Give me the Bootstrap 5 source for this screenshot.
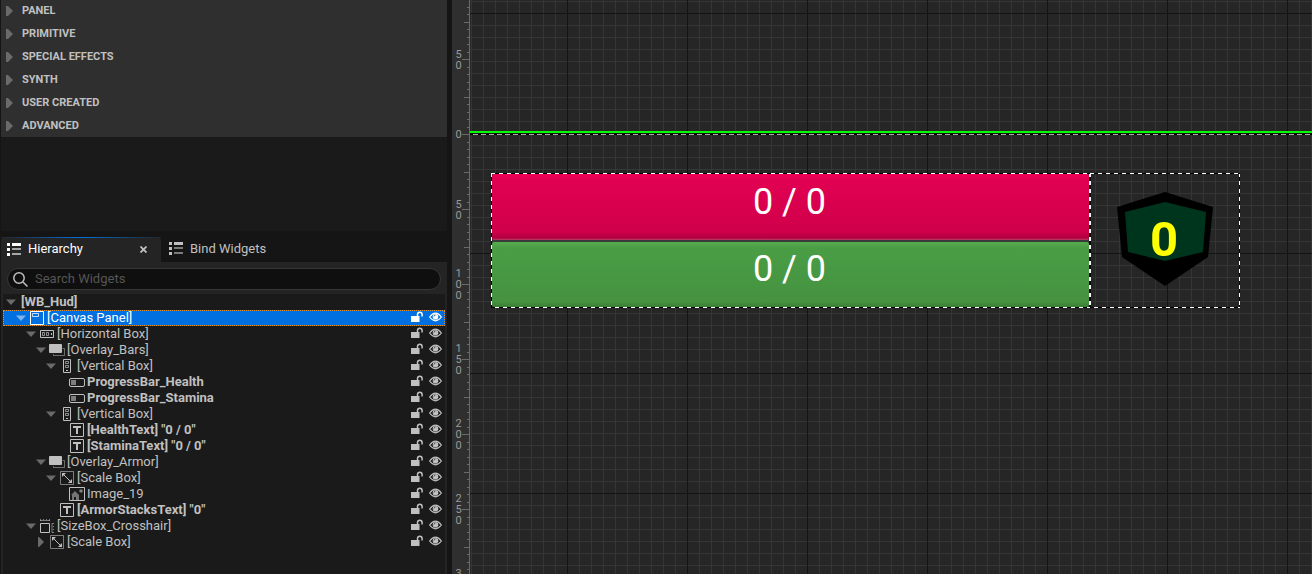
<!DOCTYPE html>
<html lang="en">
<head>
<meta charset="utf-8">
<meta name="viewport" content="width=device-width, initial-scale=1">
<title>WB_Hud</title>
<link href="https://cdn.jsdelivr.net/npm/bootstrap@5.3.0/dist/css/bootstrap.min.css" rel="stylesheet">
<style>
body{font-family:Roboto,"Liberation Sans",sans-serif;background:#151515;color:#c0c0c0;font-size:13px;line-height:16px}
.editor{min-height:100vh}
.side{width:447px;padding-left:1px}
.palette-group{height:23px;padding:0 0 0 5px;gap:9px;background:#2f2f2f;border:0;color:#c0c0c0;font-size:11px;font-weight:700;text-align:left}
.palette-first{height:22px}
.palette-space{height:94px;background:#1a1a1a}
.tabs{height:25px;margin-top:6px}
.tab-item{height:25px;border:0;background:none;color:#c0c0c0;padding:0 0 2px;gap:7px}
.tab-on{width:160px;background:#242424;color:#fff;border-radius:4px 4px 0 0;border-top:1px solid;border-image:linear-gradient(90deg,#242424,#0070e0 50%,#242424) 1;padding:0 14px 2px 6px}
.hier{background:#242424;padding:6px 2px 0}
.search{height:22px;margin:0 4px 4px;border:1px solid #363636;border-radius:11px;background:#0f0f0f;padding:0 5px;gap:7px}
.search input{background:none;border:0;outline:0;color:#c0c0c0;padding:0;font-size:13px}
.search input::placeholder{color:#555;opacity:1}
.tree{background:#1a1a1a}
.tree-row{height:16px;padding-right:3px;color:#c0c0c0;white-space:nowrap}
.tree-row .twist{width:10px;margin-right:3px;color:#6a6a6a}
.icon-cell{width:16px;margin-right:2px}
.tree-row b{font-weight:700}
.tree-row.picked{background:#0070e0;color:#fff;outline:1px dotted #e0912f;outline-offset:-1px}
.tree-row.picked .twist{color:#7fb2ea}
.act{border:0;background:none;padding:0 0 2px;color:inherit}
.acts{gap:5px}
.d0{padding-left:3px}.tree-row.d0 .twist{margin-right:5px}
.d1{padding-left:13px}.d2{padding-left:23px}.d3{padding-left:33px}.d4{padding-left:43px}
.d5{padding-left:66px}.d4n{padding-left:56px}
svg{flex:none;display:block}
.ruler{width:18px;margin-left:5px;background:#2f2f2f;border-right:1px solid #6a6a6a;overflow:hidden;color:#9a9a9a;font-size:11px;line-height:11px}
.ruler svg{left:0;top:0}
.ruler ol{margin:0;padding:22px 0 0 3px;width:10px}
.ruler li{height:75px;word-break:break-all;text-align:center}
.ruler span{width:7px}
.canvas{min-width:0;overflow:hidden;background-color:#262626;
background-image:linear-gradient(#141414 1px,transparent 1px),linear-gradient(90deg,#141414 1px,transparent 1px),linear-gradient(#353535 1px,transparent 1px),linear-gradient(90deg,#353535 1px,transparent 1px);
background-size:120px 120px,120px 120px,12px 12px,12px 12px;background-position:97px 13px,97px 13px,1px 1px,1px 1px}
.topedge{height:2px;margin:131px 0 1px;background:#0f0}
.dash-h{height:1px;background:repeating-linear-gradient(90deg,#000 0 3px,#aaa 3px 8px)}
.hud{width:749px;height:135px;margin:38px 0 0 21px}
.dashed{padding:1px;background:
repeating-linear-gradient(90deg,#fff 0 4px,#000 4px 8px) 0 0/100% 1px no-repeat,
repeating-linear-gradient(90deg,#000 0 4px,#fff 4px 8px) 0 100%/100% 1px no-repeat,
repeating-linear-gradient(#fff 0 4px,#000 4px 8px) 0 0/1px 100% no-repeat,
repeating-linear-gradient(#fff 0 4px,#000 4px 8px) 100% 0/1px 100% no-repeat}
.bars{width:599px}
.meter{color:#fff;font-size:36px;line-height:40px;padding:8px 2px 0 0;border-radius:2px}
.health{height:66px;background:linear-gradient(#f00058,#e10052 6px,#d0004a 58px,#b00040 64px,#c04068)}
.stamina{height:65px;padding-top:7px;background:linear-gradient(#57ab50,#4a9d45 6px,#459240 60px,#3b7c37)}
.split{height:2px;background:#3a3a3a}
.armor{padding:1px 2px 5px 1px}
.armor text{font:700 49px Roboto,sans-serif}
</style>
</head>
<body>
<svg width="0" height="0" class="position-absolute" aria-hidden="true">
<defs>
<symbol id="open" viewBox="0 0 10 10"><path d="M0 2.500h10L5 8z" fill="currentColor"/></symbol>
<symbol id="shut" viewBox="0 0 10 10"><path d="M2 0h1l5 5-5 5H2z" fill="currentColor"/></symbol>
<symbol id="list" viewBox="0 0 14 13"><path d="M0 0h3v3H0zM0 5h3v3H0zM0 10h3v3H0zM5 0h9v3H5z" fill="currentColor"/><path d="M5 5h9v2H5zM5 10h9v2H5z" fill="currentColor" opacity=".6"/></symbol>
<symbol id="lock" viewBox="0 0 13 12"><path d="M0 5h8.500v6H0z" fill="currentColor"/><path d="M6.500 5V3.500a2.300 2.300 0 0 1 4.600 0V5.500" fill="none" stroke="currentColor" stroke-width="1.500"/></symbol>
<symbol id="eye" viewBox="0 0 13 10"><path d="M.6 5Q6.500-2.600 12.400 5 6.500 12.600.6 5z" fill="none" stroke="currentColor" stroke-width="1.200"/><circle cx="6.500" cy="4.800" r="2.800" fill="currentColor"/><path d="M5 4.500A1.500 1.500 0 0 1 6.500 3" fill="none" stroke="#333" stroke-width=".8"/></symbol>
<symbol id="canvasp" viewBox="0 0 14 14"><path d="M.5.5h13v13H.5z" fill="none" stroke="currentColor"/><path d="M2.500 2.500h6v3h-6z" fill="none" stroke="currentColor" opacity=".75"/></symbol>
<symbol id="hbox" viewBox="0 0 14 8"><path d="M.5.5h13v7H.5z" fill="none" stroke="currentColor"/><path d="M2.500 2.500h2v3h-2zM6.500 2.500h2v3h-2z" fill="none" stroke="currentColor" opacity=".7"/><path d="M11 3h1v2h-1z" fill="currentColor"/></symbol>
<symbol id="vbox" viewBox="0 0 8 14"><path d="M.5.5h7v13h-7z" fill="none" stroke="currentColor"/><path d="M2.500 2.500h3v2h-3zM2.500 6.500h3v2h-3z" fill="none" stroke="currentColor" opacity=".7"/><path d="M3 11h2v1H3z" fill="currentColor"/></symbol>
<symbol id="overlay" viewBox="0 0 16 12"><path d="M13.500 4.500h2v7h-11V10" fill="none" stroke="currentColor" opacity=".5"/><rect width="13" height="9" rx="1" fill="currentColor"/></symbol>
<symbol id="prog" viewBox="0 0 16 9"><rect x=".5" y=".5" width="15" height="8" rx="1.500" fill="none" stroke="currentColor"/><path d="M2 2h5v5H2z" fill="currentColor" opacity=".6"/></symbol>
<symbol id="txt" viewBox="0 0 14 14"><path d="M.5.500h13v13H.5z" fill="none" stroke="currentColor"/><path d="M3 3h8v2H8v6H6V5H3z" fill="currentColor"/></symbol>
<symbol id="scale" viewBox="0 0 14 14"><path d="M.5.500h13v13H.5z" fill="none" stroke="currentColor" opacity=".6"/><path d="M2 2h4L2 6zM12 12H8l4-4z" fill="currentColor"/><path d="M4 4l6 6" stroke="currentColor"/></symbol>
<symbol id="image" viewBox="0 0 16 14"><path d="M.5.500h15v13H.5z" fill="none" stroke="currentColor"/><path d="M2 8l4-4 4 4v5H7v-3H5v3H3V8z" fill="currentColor" opacity=".55"/><circle cx="12" cy="4" r="1.800" fill="currentColor" opacity=".6"/></symbol>
<symbol id="size" viewBox="0 0 14 14"><path d="M.5 4.500h9v9h-9z" fill="none" stroke="currentColor"/><path d="M0 1.500h10M.5 0v2M3.500 0v1M6.500 0v1M9.500 0v2M14 4.500h-2v9h2M14 7.500h-1M14 10.500h-1" fill="none" stroke="currentColor" opacity=".6"/></symbol>
<symbol id="arrow" viewBox="0 0 7 10"><path d="M0 0h2l5 5-5 5H0z" fill="#6a6a6a"/></symbol>
</defs>
</svg>
<div class="editor d-flex">
<aside class="side flex-shrink-0 d-flex flex-column">
<div class="d-flex flex-column">
<button class="palette-group palette-first d-flex align-items-center"><svg width="7" height="10"><use href="#arrow"/></svg>PANEL</button>
<button class="palette-group d-flex align-items-center"><svg width="7" height="10"><use href="#arrow"/></svg>PRIMITIVE</button>
<button class="palette-group d-flex align-items-center"><svg width="7" height="10"><use href="#arrow"/></svg>SPECIAL EFFECTS</button>
<button class="palette-group d-flex align-items-center"><svg width="7" height="10"><use href="#arrow"/></svg>SYNTH</button>
<button class="palette-group d-flex align-items-center"><svg width="7" height="10"><use href="#arrow"/></svg>USER CREATED</button>
<button class="palette-group d-flex align-items-center"><svg width="7" height="10"><use href="#arrow"/></svg>ADVANCED</button>
</div>
<div class="palette-space"></div>
<div class="tabs d-flex">
<button class="tab-item tab-on d-flex align-items-center"><svg width="14" height="13"><use href="#list"/></svg>Hierarchy<svg class="ms-auto" width="7" height="7" viewBox="0 0 7 7" stroke="#c0c0c0" stroke-width="1.800"><path d="M.5.500l6 6M6.500.500l-6 6"/></svg></button>
<button class="tab-item ms-2 d-flex align-items-center"><svg width="14" height="13"><use href="#list"/></svg>Bind Widgets</button>
</div>
<div class="hier flex-grow-1 d-flex flex-column">
<label class="search d-flex align-items-center"><svg width="15" height="15" viewBox="0 0 15 15" fill="none" stroke="#c0c0c0" stroke-width="1.500"><circle cx="6" cy="6" r="5.200"/><path d="M10 10l4.500 4.500"/></svg><input class="flex-grow-1" type="text" placeholder="Search Widgets" aria-label="Search Widgets"></label>
<div class="tree flex-grow-1" id="tree"></div>
</div>
</aside>
<div class="ruler flex-shrink-0 position-relative">
<svg class="position-absolute" width="17" height="100%" aria-hidden="true"><defs><pattern id="ticks" width="17" height="75" y="59" patternUnits="userSpaceOnUse"><path d="M10 0h7v1h-7zM12 38h5v1h-5zM15 8h2v1h-2zM15 15h2v1h-2zM15 23h2v1h-2zM15 30h2v1h-2zM15 45h2v1h-2zM15 53h2v1h-2zM15 60h2v1h-2zM15 68h2v1h-2z" fill="#6a6a6a"/></pattern></defs><rect width="17" height="100%" fill="url(#ticks)"/></svg>
<div class="position-absolute top-0 start-0 h-100 overflow-hidden"><ol class="list-unstyled">
<li class="d-flex align-items-center"><span>50</span></li><li class="d-flex align-items-center"><span>0</span></li><li class="d-flex align-items-center"><span>50</span></li><li class="d-flex align-items-center"><span>100</span></li><li class="d-flex align-items-center"><span>150</span></li><li class="d-flex align-items-center"><span>200</span></li><li class="d-flex align-items-center"><span>250</span></li><li class="d-flex align-items-center"><span>300</span></li>
</ol></div>
</div>
<main class="canvas flex-grow-1 d-flex flex-column">
<div class="topedge"></div><div class="dash-h"></div>
<div class="hud d-flex">
<div class="bars dashed">
<div class="meter health text-center">0 / 0</div><div class="split"></div><div class="meter stamina text-center">0 / 0</div>
</div>
<div class="armor dashed flex-grow-1 d-flex justify-content-center align-items-center">
<svg width="96" height="96" viewBox="0 0 96 96"><path d="M48 1L96 16 91 66 48 95 5 66 0 16z" fill="#000"/><path d="M48 11L89 21 86 61 48 70 11 61 8 21z" fill="#00351d"/><text x="47" y="65" text-anchor="middle" fill="#ff0">0</text></svg>
</div>
</div>
</main>
</div>
<script>
const rows=[
["0","open",null,"[WB_Hud]",1],["1","open","canvasp","[Canvas Panel]",0],["2","open","hbox","[Horizontal Box]",0],
["3","open","overlay","[Overlay_Bars]",0],["4","open","vbox","[Vertical Box]",0],["5",null,"prog","ProgressBar_Health",1],
["5",null,"prog","ProgressBar_Stamina",1],["4","open","vbox","[Vertical Box]",0],["5",null,"txt",'[HealthText] "0 / 0"',1],
["5",null,"txt",'[StaminaText] "0 / 0"',1],["3","open","overlay","[Overlay_Armor]",0],["4","open","scale","[Scale Box]",0],
["5",null,"image","Image_19",0],["4n",null,"txt",'[ArmorStacksText] "0"',1],["2","open","size","[SizeBox_Crosshair]",0],
["3","shut","scale","[Scale Box]",0]];
const dims={canvasp:[14,14],hbox:[14,8],overlay:[16,12],vbox:[8,14],prog:[16,9],txt:[14,14],scale:[14,14],image:[16,14],size:[14,14]};
document.getElementById("tree").innerHTML=rows.map(([d,t,i,name,bold],n)=>{
const tw=t?`<svg class="twist" height="10"><use href="#${t}"/></svg>`:"";
const ic=i?`<span class="icon-cell d-flex justify-content-center"><svg width="${dims[i][0]}" height="${dims[i][1]}"><use href="#${i}"/></svg></span>`:"";
const acts=n?`<span class="acts ms-auto d-flex align-items-center"><button class="act" aria-label="Lock"><svg width="13" height="12"><use href="#lock"/></svg></button><button class="act" aria-label="Visibility"><svg width="13" height="10"><use href="#eye"/></svg></button></span>`:"";
return `<div class="tree-row d${d} d-flex align-items-center${n===1?" picked":""}">${tw}${ic}${bold?`<b>${name}</b>`:`<span>${name}</span>`}${acts}</div>`}).join("");
</script>
<script src="https://cdn.jsdelivr.net/npm/bootstrap@5.3.0/dist/js/bootstrap.bundle.min.js"></script>
</body>
</html>
